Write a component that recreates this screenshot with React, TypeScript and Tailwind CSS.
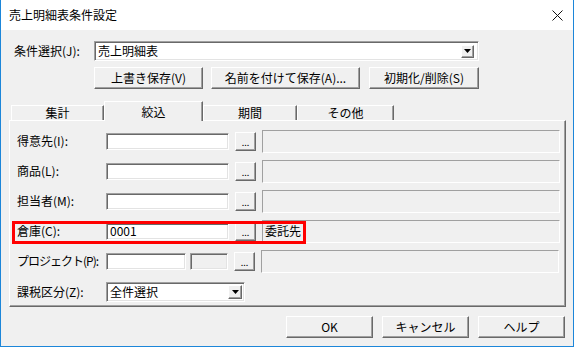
import React from 'react'

const font = { fontFamily: '"Noto Sans CJK JP", "Liberation Sans", sans-serif' }

const raised =
  'border border-t-white border-l-white border-r-[#696969] border-b-[#696969] shadow-[inset_-1px_-1px_0_#a0a0a0] bg-[#f0f0f0]'
const sunken =
  'border border-t-[#a0a0a0] border-l-[#a0a0a0] border-r-white border-b-white shadow-[inset_1px_1px_0_#696969,inset_-1px_-1px_0_#e3e3e3]'
const flat = 'border border-t-[#a0a0a0] border-l-[#a0a0a0] border-r-white border-b-white'

function Button({ label, className }: { label: string; className: string }) {
  return (
    <div className={`${raised} ${className} flex items-center justify-center text-[12px] text-black`}>
      {label}
    </div>
  )
}

function DotButton() {
  return (
    <div className={`${raised} w-[21px] h-[19px] flex items-end justify-center pb-[3px] text-[9px] leading-none`}>
      ...
    </div>
  )
}

function Arrow({ className }: { className: string }) {
  return (
    <div className={`${raised} ${className} flex items-center justify-center`}>
      <svg width="7" height="4" viewBox="0 0 7 4">
        <polygon points="0,0 7,0 3.5,4" fill="#000" />
      </svg>
    </div>
  )
}

const rows = [
  { label: '得意先(I):', value: '' },
  { label: '商品(L):', value: '' },
  { label: '担当者(M):', value: '' },
  { label: '倉庫(C):', value: '0001', note: '委託先' },
]

const tabs = [
  { name: '集計', w: 'w-[93px]' },
  { name: '絞込', w: 'w-[99px]', active: true },
  { name: '期間', w: 'w-[94px]' },
  { name: 'その他', w: 'w-[97px]' },
]

export default function App() {
  return (
    <div
      className="w-[574px] h-[347px] bg-[#f0f0f0] border-x border-b border-[#1c86d9] flex flex-col text-[12px] text-black overflow-hidden"
      style={font}
    >
      {/* title bar */}
      <div className="h-[30px] bg-white flex items-center justify-between pl-[8px] pr-[10px] shrink-0">
        <span className="text-[12px]">売上明細表条件設定</span>
        <svg width="11" height="11" viewBox="0 0 11 11">
          <path d="M0.5 0.5 L10.5 10.5 M10.5 0.5 L0.5 10.5" stroke="#111" strokeWidth="1" />
        </svg>
      </div>

      {/* condition select */}
      <div className="mt-[11px] h-[20px] flex items-center pl-[13px]">
        <span className="w-[80px] shrink-0 whitespace-nowrap">条件選択(J):</span>
        <div className={`${sunken} bg-white w-[385px] h-[20px] flex items-center justify-between pl-[3px] pr-[4px]`}>
          <span className="text-[12px] leading-none">売上明細表</span>
          <Arrow className="w-[13px] h-[13px]" />
        </div>
      </div>

      {/* save buttons */}
      <div className="mt-[6px] h-[22px] flex pl-[93px] gap-[8px]">
        <Button label="上書き保存(V)" className="w-[109px] h-[22px]" />
        <Button label="名前を付けて保存(A)..." className="w-[149px] h-[22px]" />
        <Button label="初期化/削除(S)" className="w-[110px] h-[22px] ml-[1px]" />
      </div>

      {/* tabs */}
      <div className="mt-[12px] h-[19px] flex items-end pl-[10px] relative z-10">
        {tabs.map((t) =>
          t.active ? (
            <div
              key={t.name}
              className={`${t.w} h-[20px] -mb-px bg-[#f0f0f0] border-t border-l border-t-white border-l-white border-r border-r-[#696969] shadow-[inset_-1px_0_0_#a0a0a0] flex justify-center pt-[1px]`}
            >
              {t.name}
            </div>
          ) : (
            <div
              key={t.name}
              className={`${t.w} h-[15px] bg-[#f0f0f0] border-t border-l border-t-white border-l-white border-r border-r-[#696969] shadow-[inset_-1px_0_0_#a0a0a0] flex items-center justify-center leading-none`}
            >
              {t.name}
            </div>
          )
        )}
      </div>

      {/* panel */}
      <div className="ml-[8px] w-[557px] h-[187px] border border-t-white border-l-white border-r-[#696969] border-b-[#696969] shadow-[inset_-1px_-1px_0_#a0a0a0] relative flex flex-col pt-[9px] pl-[7px]">
        <div className="flex flex-col gap-[8px]">
          {rows.map((r) => (
            <div key={r.label} className="h-[22px] flex items-center">
              <span className="w-[89px] shrink-0 whitespace-nowrap">{r.label}</span>
              <div className={`${sunken} bg-white w-[123px] h-[17px] flex items-center pl-[3px] leading-none`}>
                {r.value}
              </div>
              <div className="ml-[6px]">
                <DotButton />
              </div>
              <div className={`${flat} ml-[6px] w-[298px] h-[23px] flex items-center pl-[2px]`}>
                {r.note}
              </div>
            </div>
          ))}
          <div className="h-[22px] flex items-center">
            <span className="w-[89px] shrink-0 whitespace-nowrap tracking-[-1px]">プロジェクト(P):</span>
            <div className={`${sunken} bg-white w-[80px] h-[17px]`} />
            <div className={`${sunken} bg-[#f0f0f0] ml-[4px] w-[38px] h-[17px]`} />
            <div className="ml-[6px]">
              <DotButton />
            </div>
            <div className={`${flat} ml-[6px] w-[298px] h-[23px]`} />
          </div>
        </div>
        <div className="mt-[10px] h-[20px] flex items-center">
          <span className="w-[89px] shrink-0 whitespace-nowrap">課税区分(Z):</span>
          <div className={`${sunken} bg-white w-[139px] h-[20px] flex items-center justify-between pl-[3px] pr-[2px]`}>
            <span className="leading-none">全件選択</span>
            <Arrow className="w-[14px] h-[14px]" />
          </div>
        </div>

        {/* highlight */}
        <div className="absolute left-[2px] top-[100px] w-[294px] h-[23px] border-[3px] border-[#ff0000] pointer-events-none" />
      </div>

      {/* footer */}
      <div className="mt-[9px] flex justify-end gap-[9px] pr-[8px]">
        <Button label="OK" className="w-[87px] h-[22px]" />
        <Button label="キャンセル" className="w-[87px] h-[22px]" />
        <Button label="ヘルプ" className="w-[87px] h-[22px]" />
      </div>
    </div>
  )
}
